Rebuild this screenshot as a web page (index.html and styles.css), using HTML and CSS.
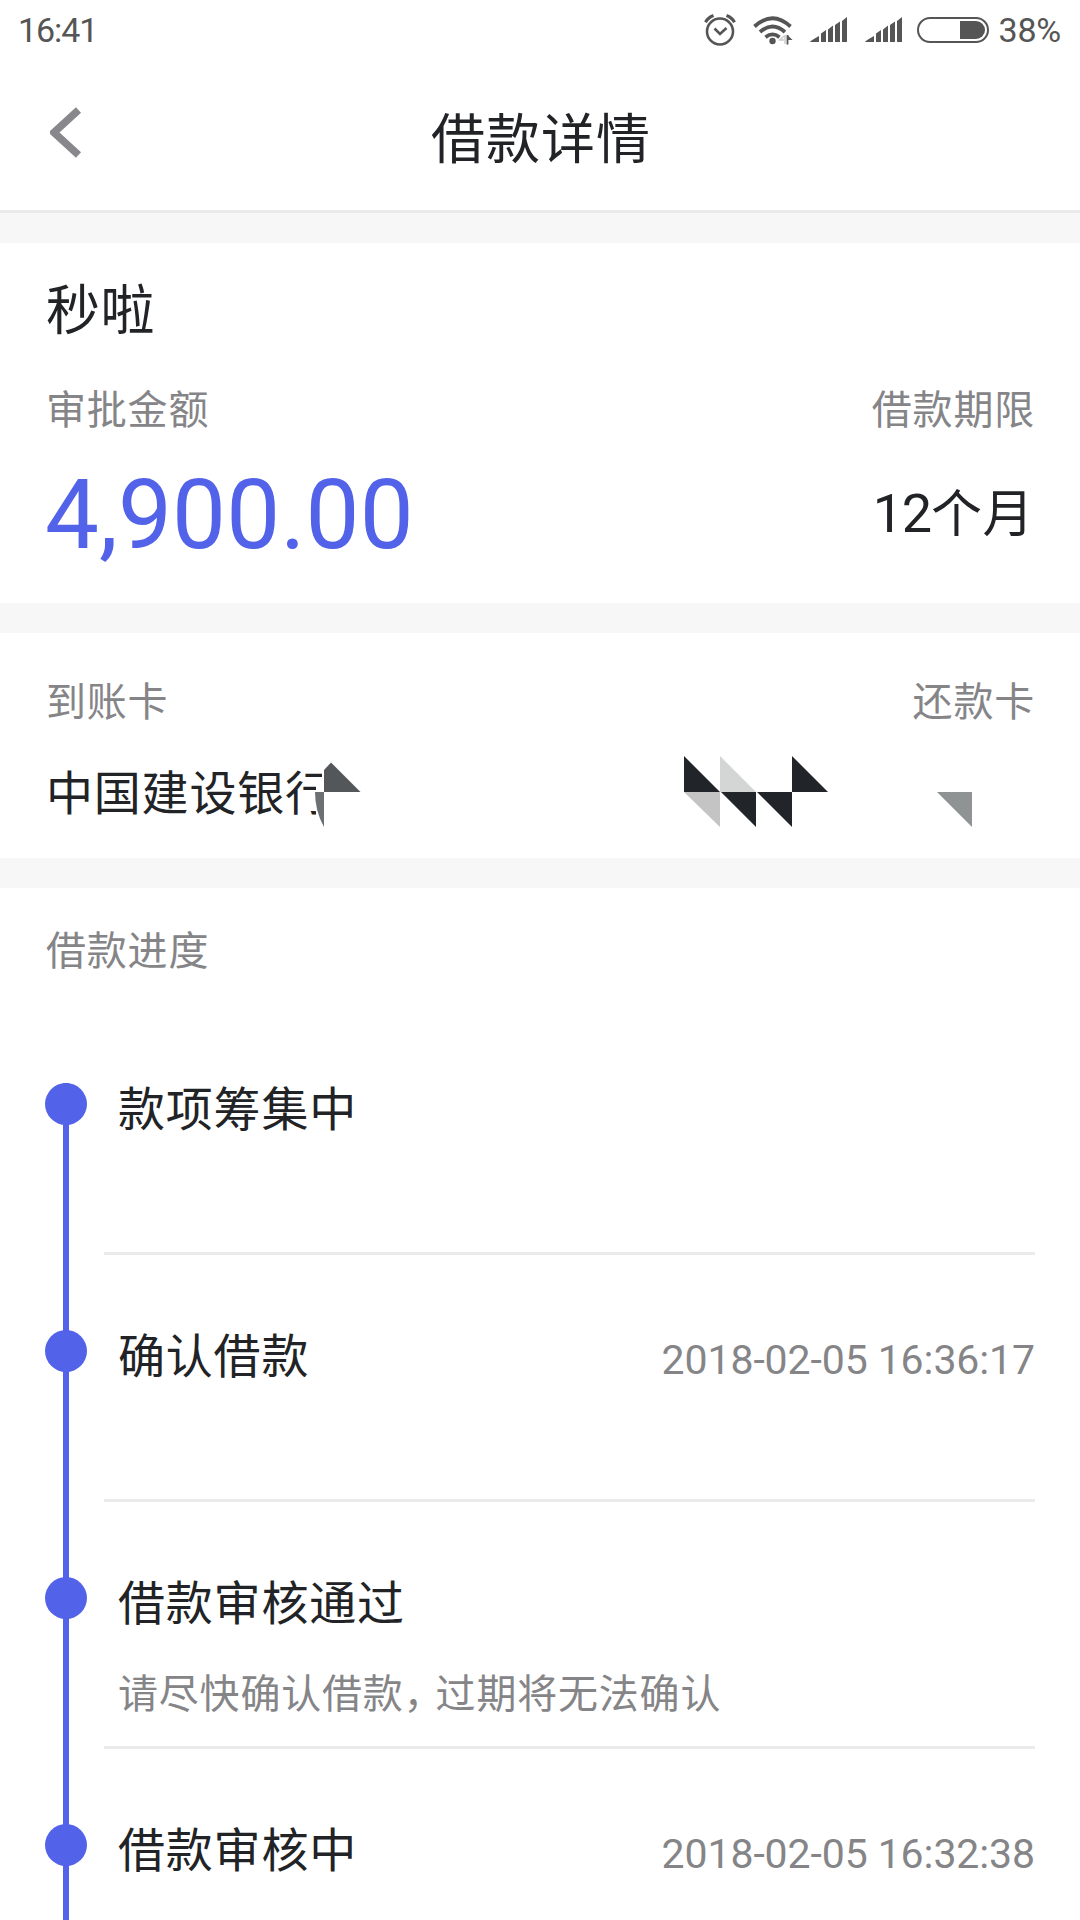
FILE: index.html
```html
<!DOCTYPE html>
<html lang="zh-CN">
<head>
<meta charset="utf-8">
<title>借款详情</title>
<link rel="stylesheet" href="styles.css">
</head>
<body>
<div class="screen">
  <div class="status">
    <span class="clock">16:41</span>
    <div class="status-icons">
      <svg class="ic-alarm" width="32" height="32" viewBox="0 0 32 32" fill="none" stroke="#555">
        <circle cx="16" cy="17.5" r="13" stroke-width="2.6"/>
        <path d="M10.5 14.5l5.5 5.5 6.5-6" stroke-width="2.6"/>
        <path d="M1.5 8.2Q4 3.5 9.5 1.5M30.500 8.200Q28 3.500 22.500 1.500" stroke-width="3.200"/>
      </svg>
      <svg class="ic-wifi" width="40" height="30" viewBox="0 0 40 30" fill="none" stroke="#555" stroke-width="3.800">
        <path d="M1.500 11.500Q19.500-5 37.500 11.500M7 17Q19.500 6 32 17M12.500 22.300Q19.500 16.500 26.500 22.300"/>
        <circle cx="19.500" cy="26" r="3.200" fill="#555" stroke="none"/>
        <path d="M34.500 20v9.500" stroke-width="1.800"/>
        <path d="M34.500 20l5 5h-5z" fill="#555" stroke="none"/>
        <path d="M32 20v9M31 21l-4 4h4" stroke="#ccc" stroke-width="1.500"/>
      </svg>
      <svg class="ic-signal" width="38" height="26" viewBox="0 0 38 26" fill="#555">
        <path d="M0 25q0-1 9-6v6zM11 16.500l5-3.500v12h-5zM18 12.500l5-4v16.500h-5zM25 8l5-3.500v20.500h-5zM32 4l5-4v25h-5z"/>
      </svg>
      <svg class="ic-signal" width="38" height="26" viewBox="0 0 38 26" fill="#555">
        <path d="M0 25q0-1 9-6v6zM11 16.500l5-3.500v12h-5zM18 12.500l5-4v16.500h-5zM25 8l5-3.500v20.500h-5zM32 4l5-4v25h-5z"/>
      </svg>
      <svg class="ic-battery" width="72" height="26" viewBox="0 0 72 26">
        <rect x="1" y="1" width="70" height="24" rx="12" fill="none" stroke="#555" stroke-width="2"/>
        <path d="M43 4h16a9 9 0 0 1 0 18h-16z" fill="#555"/>
      </svg>
      <span class="percent">38%</span>
    </div>
  </div>

  <header class="nav">
    <svg class="back" width="32" height="51" viewBox="0 0 32 51"><path d="M28.500 3L4 25.500l24.500 22.500" fill="none" stroke="#88888c" stroke-width="7.500"/></svg>
    <h1 class="nav-title">借款详情</h1>
    <span class="nav-spacer"></span>
  </header>

  <section class="card loan">
    <h2 class="lender">秒啦</h2>
    <div class="row labels"><span>审批金额</span><span>借款期限</span></div>
    <div class="row figures">
      <span class="amount">4,900.00</span>
      <span class="term">12<span class="unit">个月</span></span>
    </div>
  </section>

  <section class="card bank">
    <div class="row labels"><span>到账卡</span><span>还款卡</span></div>
    <div class="bank-name">中国建设银行</div>
    <svg class="mask" width="680" height="80" viewBox="310 750 680 80">
      <path d="M322 750h50v80h-56v-47h6z" fill="#fff"/>
      <path d="M324 770l7-7.500 29.500 29.500H324z" fill="#53575a"/>
      <path d="M315 792h9v35q-9-16-9-35z" fill="#6c7073"/>
      <path d="M684 756v36h36zM721 792h35v35zM757 792h35v35zM792 756v36h36z" fill="#212529"/>
      <path d="M720 756v36h36z" fill="#d4d6d5"/>
      <path d="M684 792h36v35z" fill="#c4c4c4"/>
      <path d="M937 792h35v35z" fill="#8f9393"/>
    </svg>
  </section>

  <section class="card progress">
    <div class="labels">借款进度</div>
    <ol class="timeline">
      <li class="step">
        <div class="rail"><i class="dot"></i></div>
        <div class="body"><div class="row"><span class="name">款项筹集中</span></div></div>
      </li>
      <li class="step">
        <div class="rail"><i class="dot"></i></div>
        <div class="body"><div class="row"><span class="name">确认借款</span><time>2018-02-05 16:36:17</time></div></div>
      </li>
      <li class="step">
        <div class="rail"><i class="dot"></i></div>
        <div class="body">
          <div class="row"><span class="name">借款审核通过</span></div>
          <p class="note">请尽快确认借款<span class="comma">，</span>过期将无法确认</p>
        </div>
      </li>
      <li class="step">
        <div class="rail"><i class="dot"></i></div>
        <div class="body"><div class="row"><span class="name">借款审核中</span><time>2018-02-05 16:32:38</time></div></div>
      </li>
    </ol>
  </section>
</div>
</body>
</html>
```
FILE: styles.css
```css
* { box-sizing: border-box; margin: 0; padding: 0; }

body {
  background: #fff;
  font-family: "Noto Sans CJK SC", sans-serif;
  color: #212326;
}

.screen {
  width: 1080px;
  height: 1920px;
  overflow: hidden;
  display: flex;
  flex-direction: column;
  gap: 30px;
  background: #f7f7f7;
}

.status {
  height: 60px;
  margin-bottom: -30px;
  padding: 0 19px 0 18px;
  display: flex;
  justify-content: space-between;
  align-items: center;
  background: #fff;
  color: #555;
  font: 34px/60px Roboto, sans-serif;
}

.clock { letter-spacing: -1.1px; }
.percent { margin-left: 9px; letter-spacing: -0.2px; }
.status-icons { display: flex; align-items: center; }
.status-icons svg { flex: none; }
.ic-alarm { margin-right: 17px; }
.ic-wifi { margin-right: 17px; }
.ic-signal { margin-right: 17px; }
.ic-battery { margin-left: -3px; }

.nav {
  height: 153px;
  padding: 0 48px 0 50px;
  display: flex;
  justify-content: space-between;
  align-items: flex-start;
  background: #fff;
  border-bottom: 3px solid #ebebeb;
}

.back { margin-top: 47px; }
.nav-title { font-size: 54px; font-weight: 400; line-height: 80px; letter-spacing: 1px; margin-top: 36px; }
.nav-spacer { width: 32px; }

.card { background: #fff; padding: 0 45px 0 46px; }
.row { display: flex; justify-content: space-between; align-items: center; }
.labels { font-size: 40px; line-height: 60px; letter-spacing: 0.8px; color: #858588; }

.loan { height: 360px; padding-top: 24px; }
.lender { font-size: 54px; font-weight: 400; line-height: 80px; letter-spacing: 0.5px; }
.loan .labels { margin-top: 30px; }
.figures { height: 100px; margin-top: 28px; }
.amount { font: 96px/100px Roboto, sans-serif; color: #5262e9; letter-spacing: 0.1px; margin-left: -1px; }
.term { font: 54px/80px Roboto, sans-serif; letter-spacing: -1.2px; margin-right: 1px; padding-bottom: 2px; }
.unit { font-family: "Noto Sans CJK SC", sans-serif; font-size: 51px; letter-spacing: 0.5px; line-height: 1; }

.bank { position: relative; height: 225px; padding-top: 36px; }
.bank-name { margin-top: 26px; font-size: 47px; line-height: 70px; letter-spacing: 0.8px; }
.mask { position: absolute; left: 310px; top: 117px; }

.progress { flex: 1; padding-top: 30px; min-height: 0; }
.timeline { list-style: none; margin-top: 105px; }
.step { display: flex; gap: 17px; height: 247px; margin-left: -1px; }
.rail {
  width: 42px;
  flex: none;
  background: linear-gradient(#5262e9, #5262e9) center / 6px 100% no-repeat;
}
.dot { display: block; width: 42px; height: 42px; border-radius: 50%; background: #5262e9; }
.body { flex: 1; height: 172px; padding-left: 14px; border-bottom: 3px solid #ebebeb; }
.body .row { height: 44px; }
.name { font-size: 47px; letter-spacing: 0.8px; }
time { font: 41px/50px Roboto, sans-serif; letter-spacing: -0.1px; color: #858588; margin-top: 16px; }
.note { margin-top: 40px; font-size: 40px; line-height: 60px; letter-spacing: 0.8px; color: #858588; }
.comma { letter-spacing: -8px; }
```
